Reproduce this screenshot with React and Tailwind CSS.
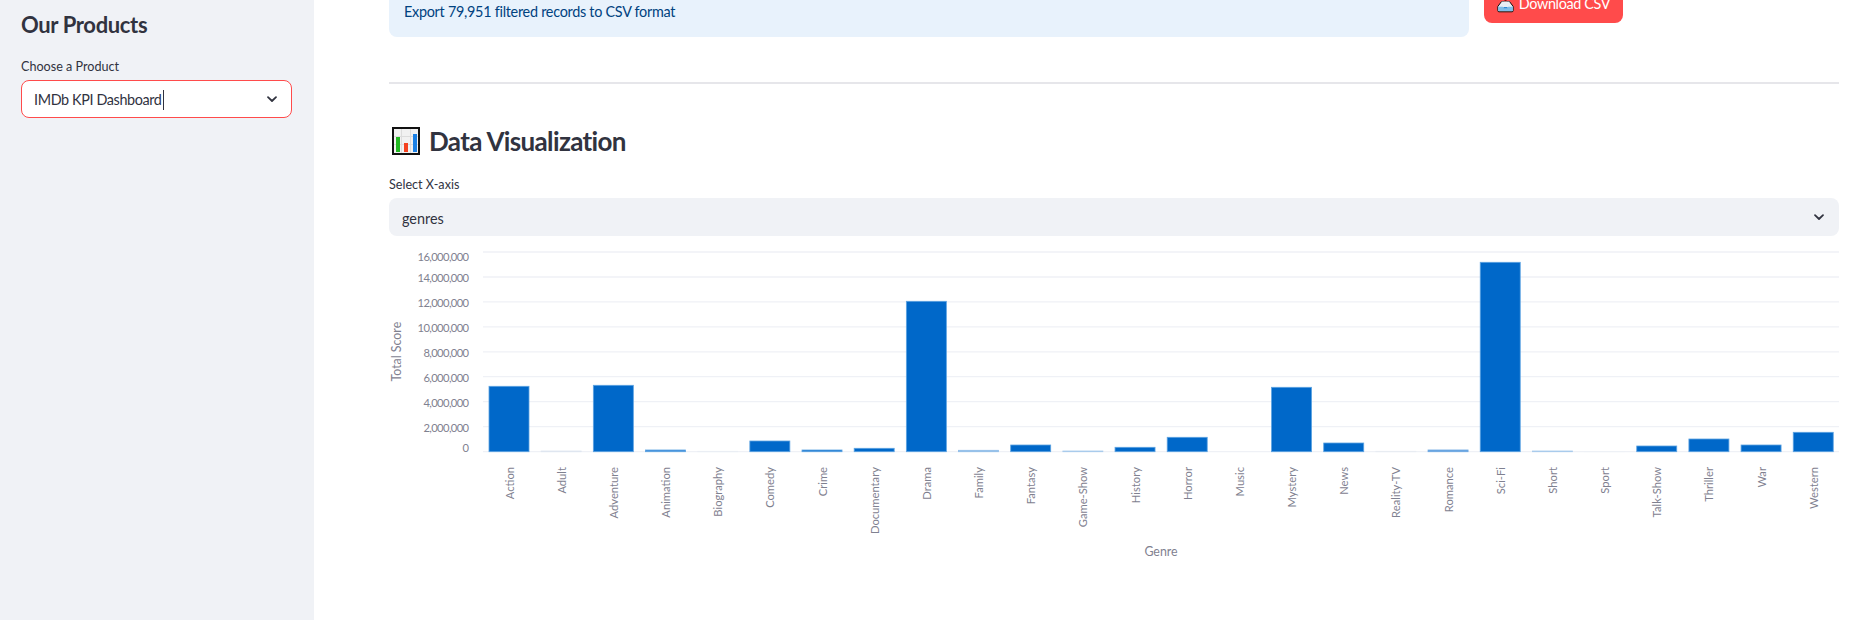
import React from "react";

const ChevronDown = ({ className }) => (
  <svg viewBox="0 0 12 12" width="12" height="12" className={className} fill="none" stroke="#31333f" strokeWidth="1.8" strokeLinecap="round" strokeLinejoin="round">
    <path d="M2 4.2 L6 8 L10 4.2" />
  </svg>
);

const ChartEmoji = () => (
  <svg viewBox="0 0 28 28" width="28" height="28" className="shrink-0" shapeRendering="crispEdges">
    <rect x="0" y="0" width="28" height="28" fill="#111" />
    <rect x="2" y="2" width="24" height="24" fill="#f1f1f1" />
    <path d="M9 2h1v24H9zM18 2h1v24h-1zM2 9h24v1H2zM2 17h24v1H2z" fill="#dcdcdc" />
    <rect x="4" y="10" width="4" height="15" fill="#22b922" />
    <rect x="12" y="16" width="4" height="9" fill="#f4411f" />
    <rect x="21" y="7" width="4" height="18" fill="#1a80e5" />
  </svg>
);

const TrayEmoji = () => (
  <svg viewBox="0 0 17 17" width="17" height="17" className="shrink-0">
    <path d="M8.5 0v9" stroke="#7a1010" strokeWidth="2" />
    <path d="M5 5.5h2.5M9.5 5.5H12" stroke="#111" strokeWidth="1" />
    <path d="M4.5 5.5 L0.8 10.5 V14.5 Q0.8 15.8 2 15.8 H15 Q16.2 15.8 16.2 14.5 V10.5 L12.5 5.5" fill="#e8eef5" stroke="#111" strokeWidth="1" />
    <path d="M1.3 10.8h4.5l1 1.6h3.4l1-1.6h4.5V15H1.3z" fill="#7fbde8" />
    <path d="M6.5 11h4v1.5h-4z" fill="#2b8ad8" />
  </svg>
);

// name, top of the bar (page px), fill, edge
const B = "#0068c9";
const E = "#5da3e2";
const bars = [
  ["Action", 386.3, B, E],
  ["Adult", 451, "#dfe6f0", "#dfe6f0"],
  ["Adventure", 385.3, B, E],
  ["Animation", 450, "#3d8ddb", "#5da3e2"],
  ["Biography", 451.3, "#eaeef4", "#eaeef4"],
  ["Comedy", 441, B, E],
  ["Crime", 450, "#1a78d0", "#5da3e2"],
  ["Documentary", 448.3, B, E],
  ["Drama", 301.3, B, E],
  ["Family", 450.3, "#8fbde9", "#8fbde9"],
  ["Fantasy", 445, B, E],
  ["Game-Show", 451, "#a9cbec", "#a9cbec"],
  ["History", 447.3, B, E],
  ["Horror", 437.3, B, E],
  ["Music", 451.7, B, E],
  ["Mystery", 387.3, B, E],
  ["News", 443, B, E],
  ["Reality-TV", 451.3, "#e8ecf2", "#e8ecf2"],
  ["Romance", 450, "#6aa6e2", "#6aa6e2"],
  ["Sci-Fi", 262.3, B, E],
  ["Short", 451, "#a9cbec", "#a9cbec"],
  ["Sport", 451.5, "#eef1f6", "#eef1f6"],
  ["Talk-Show", 446, B, E],
  ["Thriller", 439, B, E],
  ["War", 445, B, E],
  ["Western", 432.3, B, E],
];

const yTicks = [
  ["16,000,000", 252, 256],
  ["14,000,000", 277, 277.5],
  ["12,000,000", 301.9, 302.5],
  ["10,000,000", 326.8, 327.5],
  ["8,000,000", 351.8, 352.5],
  ["6,000,000", 376.7, 377.5],
  ["4,000,000", 401.7, 402.5],
  ["2,000,000", 426.7, 427.5],
  ["0", 451.7, 447],
];

// chart svg origin sits at page (389, 240)
const OX = 389;
const OY = 240;
const BASE = 451.7 - OY;

function Chart() {
  return (
    <svg width="1450" height="340" className="block font-[Lato,sans-serif]">
      {yTicks.map(([label, gy, ty]) => (
        <g key={label}>
          <line x1={483 - OX} x2={1450} y1={gy - OY} y2={gy - OY} stroke="#eff1f6" strokeWidth="1.3" />
          <text x={468.5 - OX} y={ty - OY} dominantBaseline="central" textAnchor="end" fontSize="11.2" fill="#7f8190" className="tracking-[-0.6px]">
            {label}
          </text>
        </g>
      ))}
      {bars.map(([name, top, fill, edge], i) => {
        const x = 489 - OX + i * 52.17;
        const cx = x + 20;
        return (
          <g key={name}>
            {top < 451.6 && (
              <rect x={x} y={top - OY} width="40" height={BASE - (top - OY)} fill={fill} stroke={edge} strokeWidth="0.8" />
            )}
            <text transform={`translate(${cx} ${467 - OY}) rotate(-90)`} dominantBaseline="central" textAnchor="end" fontSize="11.2" fill="#7f8190">
              {name}
            </text>
          </g>
        );
      })}
      <text transform={`translate(${396 - OX} ${351.7 - OY}) rotate(-90)`} dominantBaseline="central" textAnchor="middle" fontSize="12.4" fill="#7f8190">
        Total Score
      </text>
      <text x={1161 - OX} y={551.7 - OY} dominantBaseline="central" textAnchor="middle" fontSize="12.4" fill="#7f8190">
        Genre
      </text>
    </svg>
  );
}

export default function App() {
  return (
    <div className="flex h-[620px] w-[1874px] overflow-hidden bg-white font-[Lato,sans-serif] text-[#31333f]">
      <aside className="w-[314px] shrink-0 bg-[#f0f2f6] px-[21px] pt-[10px]">
        <h2 className="text-[22px] font-bold leading-[30px] tracking-[-0.35px]">Our Products</h2>
        <div className="mt-[19px] text-[12.6px] leading-[16px]">Choose a Product</div>
        <div className="mt-[5px] flex h-[38px] w-[271px] items-center justify-between rounded-lg border border-[#ff4b4b] bg-white pl-[12px] pr-[13px]">
          <span className="flex items-center pt-[2px] text-[14.4px] tracking-[-0.38px]">
            IMDb KPI Dashboard
            <span className="ml-px inline-block h-[20px] w-px bg-[#31333f]" />
          </span>
          <ChevronDown />
        </div>
      </aside>

      <main className="flex flex-1 flex-col pl-[75px] pr-[35px]">
        <div className="flex items-start gap-[15px]">
          <div className="flex h-[37px] w-[1080px] items-start rounded-b-lg bg-[#e8f2fc] pl-[15px] pt-[1px] text-[14.4px] leading-[22px] tracking-[-0.27px] text-[#004280]">
            Export 79,951 filtered records to CSV format
          </div>
          <div className="flex h-[23px] w-[139px] items-end justify-center gap-[5px] rounded-b-lg bg-[#ff4b4b] pb-[10px] text-[14.4px] leading-[18px] tracking-[-0.35px] text-white">
            <TrayEmoji />
            <span>Download CSV</span>
          </div>
        </div>

        <div className="mt-[45px] h-[2px] w-full bg-[#e6e6ea]" />

        <div className="mt-[41px] flex h-[32px] items-center gap-[9px] pl-[3px]">
          <ChartEmoji />
          <h2 className="text-[26px] font-bold leading-[32px] tracking-[-0.65px]">Data Visualization</h2>
        </div>

        <div className="mt-[20px] text-[12.6px] leading-[16px]">Select X-axis</div>
        <div className="mt-[5px] flex h-[38px] w-full items-center justify-between rounded-lg bg-[#f0f2f6] pl-[13px] pr-[14px] text-[14.4px]">
          <span className="pt-[3px]">genres</span>
          <ChevronDown />
        </div>

        <div className="mt-[4px]">
          <Chart />
        </div>
      </main>
    </div>
  );
}
